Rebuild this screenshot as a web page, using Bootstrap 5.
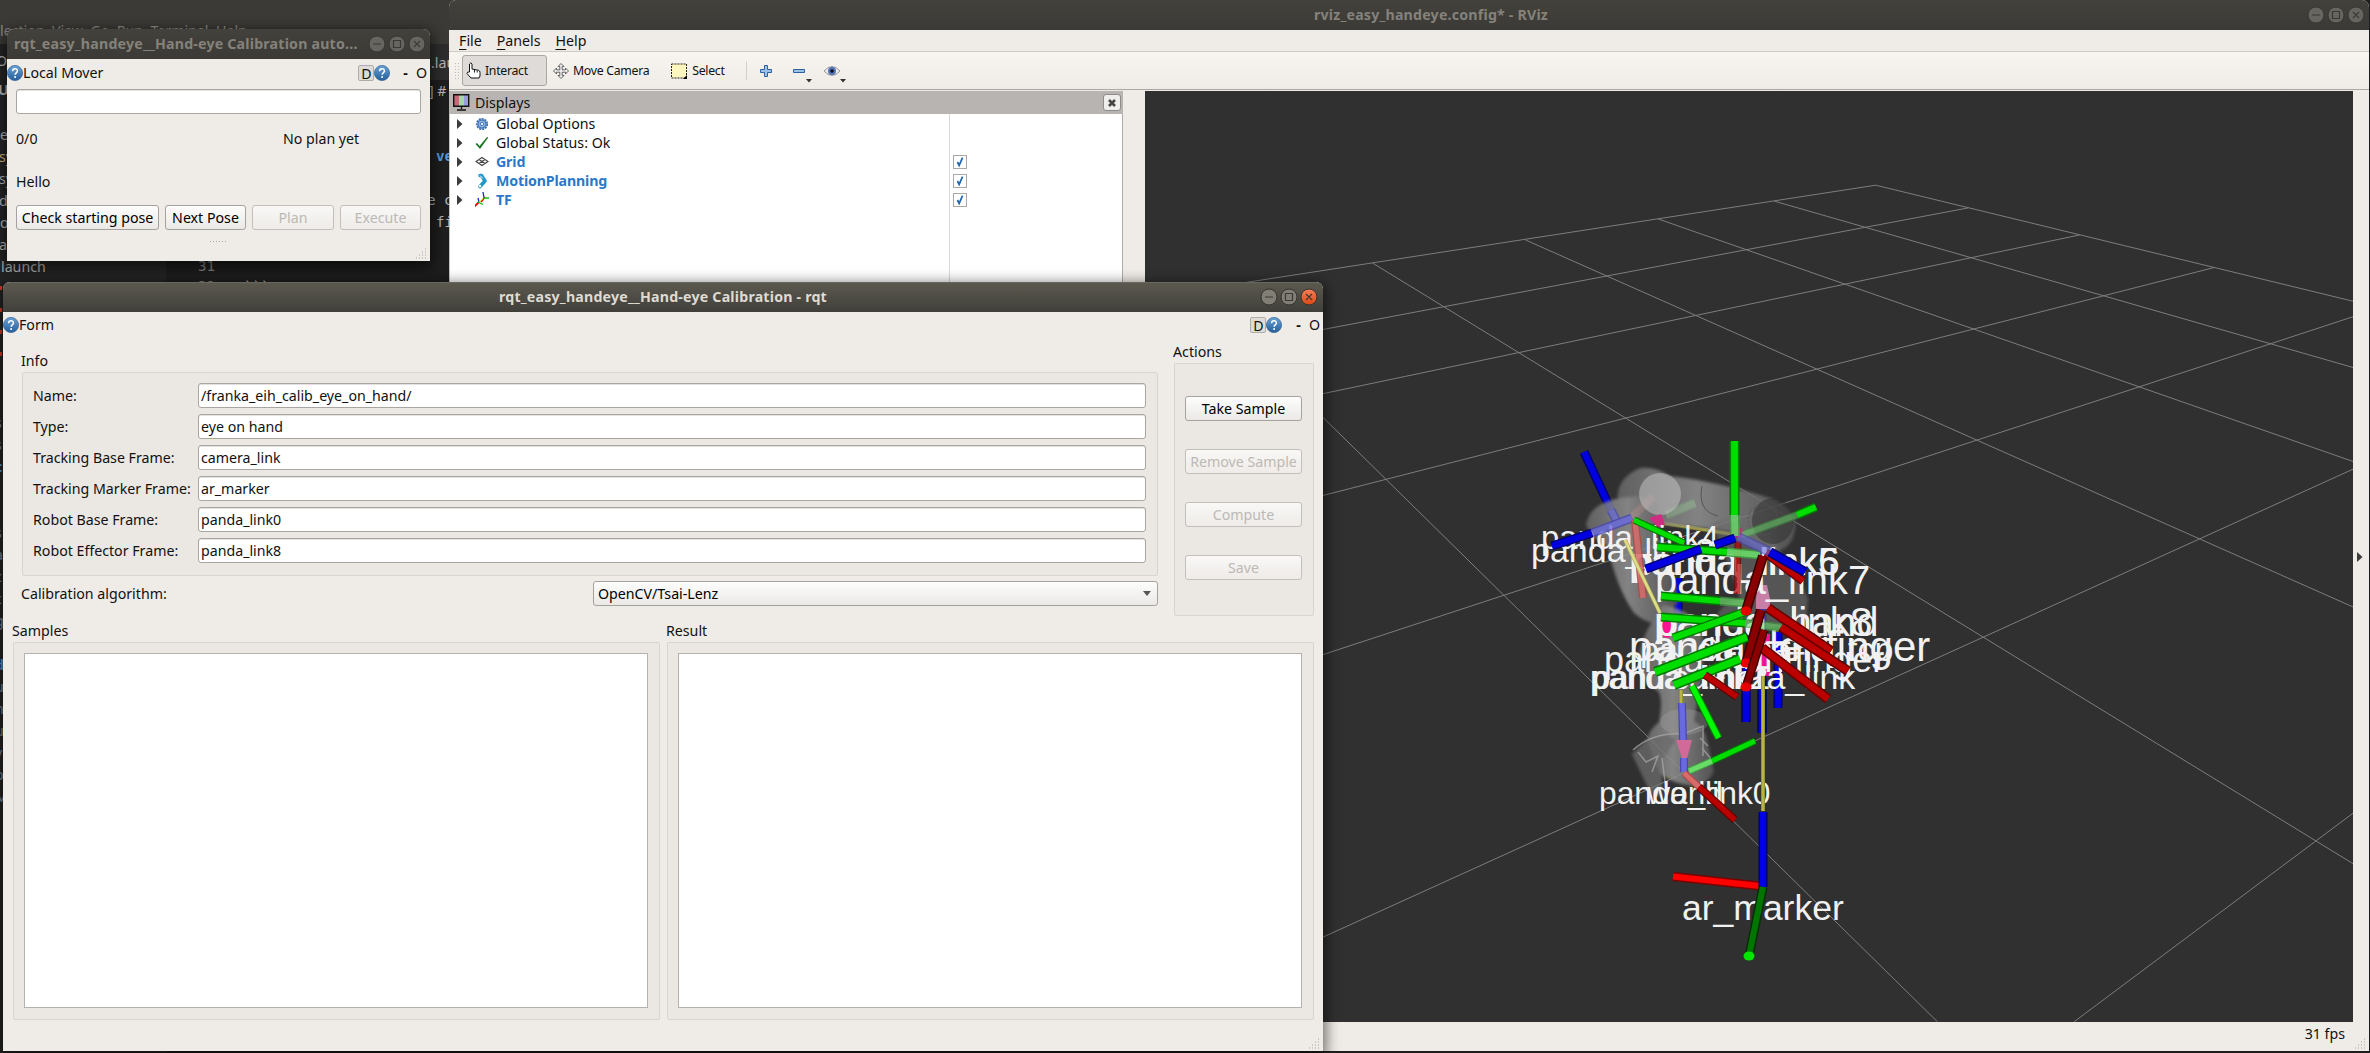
<!DOCTYPE html>
<html lang="en">
<head>
<meta charset="utf-8">
<title>rqt_easy_handeye</title>
<link href="https://cdn.jsdelivr.net/npm/bootstrap@5.3.0/dist/css/bootstrap.min.css" rel="stylesheet">
<script src="https://cdn.jsdelivr.net/npm/bootstrap@5.3.0/dist/js/bootstrap.bundle.min.js"></script>
<style>
html,body{height:1053px;overflow:hidden}
body{background:#1e1e1e;font:14.2px/18px "Noto Sans","Open Sans",sans-serif;letter-spacing:0;color:#111;white-space:nowrap;position:relative;width:2370px}
svg{display:block;flex:none}
/* editor behind the windows */
.desk{left:0;top:0;width:2370px;height:1053px;background:#1e1e1e;overflow:hidden}
.desk .topbar{height:44px;width:460px;background:#3b3a36}
.desk .side{left:0;top:44px;width:166px;height:1009px;background:#252526}
.desk .tabs{left:420px;top:44px;width:40px;height:36px;background:#2d2d2d}
.frag{position:absolute;color:#b6b6b6;letter-spacing:0}
.mono{font-family:"DejaVu Sans Mono",monospace}
.sliver{left:-5px;top:412px;line-height:22px;color:#7f93a8}
.sliver b{color:#569cd6}
.ticks{left:0;top:286px;width:2px;height:78px;background:repeating-linear-gradient(#d0442c 0 4px,transparent 4px 22px)}
/* windows */
.win{position:absolute;background:#efebe6;border-radius:7px 7px 0 0;overflow:hidden}
.win-shadow{box-shadow:0 4px 14px 3px rgba(0,0,0,.55)}
.tbar{height:30px;background:linear-gradient(#42413c,#3b3a36);color:#85827b;font-weight:700;position:relative;flex:none;letter-spacing:.2px}
.tbar.on{background:linear-gradient(#5b594f,#403f3a);color:#dfdbd2;border-top:1px solid #68665d;padding-bottom:2px}
.wbtns{right:6px;top:6px;gap:2px}
.edge{border:1px solid #a9a6a1;border-radius:3px;background:#fff;height:25px;box-shadow:inset 0 1px #e4e2df}
.pbtn{border:1px solid #a6a29d;border-radius:3px;background:linear-gradient(#fdfdfd,#ebe9e6);height:25px;line-height:22px;padding:0;color:#000;font-size:inherit;letter-spacing:inherit}
.pbtn:disabled{color:#bcb9b5;border-color:#c3bfbb;opacity:1;background:linear-gradient(#f9f8f6,#eeebe8)}
.dbox{width:16px;height:16px;border:1px solid #b0aca7;border-radius:2px;background:#dfdbd7;line-height:15px;text-align:center}
.gbox{border:1px solid #d8d4ce;border-radius:2px;background:#ebe7e2}
.frow{height:25px;margin-bottom:6px}
.frow label{width:165px}
.frow .edge{padding-left:2px;line-height:23px}
.listv{border:1px solid #b5b2ae;background:#fff}
/* rviz */
.menu{height:22px;border-bottom:1px solid #cfcbc5}
.menu u{text-underline-offset:3px;text-decoration-thickness:1px}
.tools{height:38px;background:linear-gradient(#f8f5f1,#efebe6);border-bottom:1px solid #aaa6a1;font-size:12.3px;letter-spacing:-.3px}
.tool-on{background:#dfdbd8;border:1px solid #aaa6a3;border-radius:3px;width:85px;height:31px}
.handle{width:5px;height:17px;background:radial-gradient(circle,#bbb 35%,transparent 45%) 0 0/3px 3px}
.dock-h{height:23px;background:#b8b4b1}
.xbtn{width:18px;height:17px;border:1px solid #8e8b88;border-radius:3px;background:#f0eeec}
.tree{background:linear-gradient(90deg,transparent 499px,#d9d9d9 499px,#d9d9d9 500px,transparent 500px) #fff;border-right:1px solid #b0aca8;border-left:1px solid #c5c1bd}
.trow{height:19px;padding-left:7px}
.trow .arw{margin-right:12px}
.trow span{margin-left:7px}
.trow.vis{color:#2979c7;font-weight:700;letter-spacing:-.15px}
.trow.vis span{width:457px}
.chk{width:14px;height:14px;border:1px solid #aaa7a4;background:#fff}
.view3d text{font-family:"Liberation Sans",Arial,sans-serif;fill:#f1f1f1;letter-spacing:0}
.grip{position:absolute;right:3px;bottom:2px}
</style>
</head>
<body>
<svg width="0" height="0" class="position-absolute"><defs>
 <linearGradient id="hg" x1="0" y1="0" x2="0" y2="1"><stop offset="0" stop-color="#6aa2d6"/><stop offset="1" stop-color="#255e99"/></linearGradient>
 <linearGradient id="cg" x1="0" y1="0" x2="0" y2="1"><stop offset="0" stop-color="#f68058"/><stop offset="1" stop-color="#dc4714"/></linearGradient>
 <symbol id="help" viewBox="0 0 16 16"><circle cx="8" cy="8" r="7.6" fill="url(#hg)" stroke="#2f6297" stroke-width=".7"/><path d="M5.6 6.3C5.6 2.8 10.5 3 10.4 6c0 1.8-2.3 1.9-2.3 3.8" fill="none" stroke="#fff" stroke-width="1.5"/><circle cx="8.1" cy="12" r="1" fill="#fff"/></symbol>
 <symbol id="dim" viewBox="0 0 58 18"><g fill="#676560" stroke="#383733"><circle cx="9" cy="9" r="8"/><circle cx="29" cy="9" r="8"/><circle cx="49" cy="9" r="8"/></g><path d="M5 9h8M25.500 5.500h7v7h-7zM46 6l6 6M52 6l-6 6" fill="none" stroke="#3a3935" stroke-width="1.200"/></symbol>
 <symbol id="lit" viewBox="0 0 58 18"><g fill="#807e75" stroke="#35342f"><circle cx="9" cy="9" r="8"/><circle cx="29" cy="9" r="8"/></g><circle cx="49" cy="9" r="8" fill="url(#cg)" stroke="#35342f"/><path d="M5 9h8M25.500 5.500h7v7h-7zM46 6l6 6M52 6l-6 6" fill="none" stroke="#3a3935" stroke-width="1.200"/></symbol>
 <symbol id="gripdots" viewBox="0 0 11 11"><path d="M0 10h1m2 0h1m2 0h1m2 0h1M3 7h1m2 0h1m2 0h1M6 4h1m2 0h1M9 1h1" stroke="#a9a5a0"/></symbol>
 <symbol id="arr" viewBox="0 0 6 10"><path d="M0 0l5.500 5L0 10z" fill="#3c3c3c"/></symbol>
 <symbol id="tick" viewBox="0 0 14 14"><path d="M4 7l2 4 4-9" fill="none" stroke="#2166b0" stroke-width="2"/></symbol>
</defs></svg>

<div class="desk position-absolute">
 <div class="topbar"></div><div class="side position-absolute"></div><div class="tabs position-absolute"></div>
 <span class="frag" style="left:0;top:22px;color:#8d8b85">lection&nbsp; View&nbsp; Go&nbsp; Run&nbsp; Terminal&nbsp; Help</span>
 <span class="frag" style="left:-4px;top:52px">OP</span><span class="frag fw-bold" style="left:-2px;top:81px">U</span>
 <span class="frag" style="left:0;top:126px">e</span><span class="frag" style="left:-1px;top:148px;color:#d7ba7d">sy</span><span class="frag" style="left:-1px;top:170px">sy</span><span class="frag" style="left:-1px;top:192px">d</span><span class="frag" style="left:0;top:214px">o</span><span class="frag" style="left:-1px;top:236px">a</span><span class="frag" style="left:1px;top:258px">launch</span>
 <span class="frag mono" style="left:198px;top:257px;color:#858585">31</span><span class="frag mono" style="left:198px;top:277px;color:#858585">32</span><span class="frag mono" style="left:244px;top:278px">```</span>
 <span class="frag" style="left:431px;top:54px">.lau</span><span class="frag" style="left:429px;top:82px">] #</span>
 <span class="frag mono fw-bold" style="left:436px;top:147px;color:#569cd6">ve</span><span class="frag mono" style="left:427px;top:191px">e c</span><span class="frag mono" style="left:436px;top:213px">fi</span>
 <div class="ticks position-absolute"></div>
 <div class="sliver position-absolute">s<br>s<br><b>c</b><br><b>l</b><br><b>l</b><br>s<br>a<br>c<br>c<br>g<br>l<br><b>d</b><br>u<br>n<br>u<br>v<br>o<br>M</div>
</div>

<!-- RViz -->
<div class="win d-flex flex-column" style="left:449px;top:0;width:1920px;height:1051px">
 <div class="tbar d-flex align-items-center justify-content-center"><span style="margin-left:44px">rviz_easy_handeye.config* - RViz</span><div class="wbtns position-absolute d-flex" style="right:4px"><svg width="58" height="18"><use href="#dim"/></svg></div></div>
 <div class="menu d-flex align-items-center" style="gap:15px;padding-left:10px"><span><u>F</u>ile</span><span><u>P</u>anels</span><span><u>H</u>elp</span></div>
 <div class="tools d-flex align-items-center flex-none">
  <div class="handle" style="margin:0 3px 0 5px"></div>
  <div class="tool-on d-flex align-items-center" style="padding-left:3px">
   <svg width="15" height="17" viewBox="0 0 15 17"><path d="M3.500 10V2q1.500-2.500 2.500 0v5l6.500 1.300q1.500.5 1.500 2V14l-1 2H5l-4-4.500Q1 9.500 3.500 10z" fill="#fff" stroke="#111"/><path d="M8.500 8v2.500M11.200 8.500v2" stroke="#222"/></svg>
   <span style="margin-left:4px">Interact</span></div>
  <svg style="margin-left:6px" width="16" height="16" viewBox="0 0 16 16"><path d="M8 .5l3 3H9.200v3.300h3.300V5l3 3-3 3V9.200H9.200v3.300H11l-3 3-3-3h1.800V9.200H3.500V11l-3-3 3-3v1.800h3.300V3.500H5z" fill="#eee" stroke="#555" stroke-width=".9"/></svg>
  <span style="margin-left:4px">Move Camera</span>
  <svg style="margin-left:22px" width="17" height="16" viewBox="0 0 17 16"><path d="M.5 1h15v14h-15z" fill="#fdf6bf" stroke="#222" stroke-dasharray="2 1"/><path d="M16 12v4h-4z"/></svg>
  <span style="margin-left:4px">Select</span>
  <div style="width:1px;height:19px;background:#d2cec9;margin:0 13px 0 21px"></div>
  <svg width="12" height="12" viewBox="0 0 12 12"><path d="M4.500.5h3v4h4v3h-4v4h-3v-4h-4v-3h4z" fill="#9cc2e8" stroke="#2c62a4"/></svg>
  <svg style="margin-left:21px" width="22" height="24" viewBox="0 0 22 24"><path d="M.5 10.500h11v3H.5z" fill="#9cc2e8" stroke="#2c62a4"/><path d="M13 20h6l-3 3.500z" fill="#333"/></svg>
  <svg style="margin-left:9px" width="24" height="24" viewBox="0 0 24 24"><path d="M0 12q8-9 16 0-8 9-16 0z" fill="#eee" stroke="#999"/><circle cx="8" cy="12" r="4" fill="#5472b8"/><circle cx="8" cy="12" r="1.800" fill="#111"/><path d="M16 20h6l-3 3.500z" fill="#333"/></svg>
 </div>
 <div class="d-flex flex-grow-1" style="padding-top:1px">
  <div class="d-flex flex-column" style="width:674px">
   <div class="dock-h d-flex align-items-center" style="padding:0 2px 0 4px">
    <svg width="17" height="17" viewBox="0 0 17 17"><path fill="#c46a78" d="M1 1h5v11H1z"/><path fill="#a5d6a7" d="M6 1h5v11H6z"/><path fill="#9a9ade" d="M11 1h5v11h-5z"/><path d="M.7.700h15v11.500h-15zM8.500 12v3M4 16h9" fill="none" stroke="#111" stroke-width="1.400"/></svg>
    <span style="margin-left:5px">Displays</span><div class="xbtn ms-auto d-flex align-items-center justify-content-center"><svg width="8" height="8" viewBox="0 0 8 8"><path d="M1 1l6 6M7 1L1 7" stroke="#444" stroke-width="2.600"/></svg></div></div>
   <div class="tree flex-grow-1">
    <div class="trow d-flex align-items-center"><svg class="arw" width="6" height="10"><use href="#arr"/></svg><svg width="14" height="14" viewBox="0 0 14 14"><circle cx="7" cy="7" r="5.300" fill="#8db4e0" stroke="#3d6eae" stroke-width="1.600" stroke-dasharray="2 1"/><circle cx="7" cy="7" r="4" fill="none" stroke="#4779b8"/><circle cx="7" cy="7" r="1.600" fill="#fff" stroke="#4779b8"/></svg><span>Global Options</span></div>
    <div class="trow d-flex align-items-center"><svg class="arw" width="6" height="10"><use href="#arr"/></svg><svg width="14" height="14" viewBox="0 0 14 14"><path d="M.5 8L2 7l2.500 3L12 1l1.300.5L5 13z" fill="#1d7724"/></svg><span>Global Status: Ok</span></div>
    <div class="trow vis d-flex align-items-center"><svg class="arw" width="6" height="10"><use href="#arr"/></svg><svg width="14" height="14" viewBox="0 0 14 14"><path d="M7 2.500l6 4-6 4-6-4zM4 4.500l6 4M10 4.500l-6 4" fill="none" stroke="#444" stroke-width="1.200"/></svg><span>Grid</span><div class="chk"><svg width="12" height="12"><use href="#tick"/></svg></div></div>
    <div class="trow vis d-flex align-items-center"><svg class="arw" width="6" height="10"><use href="#arr"/></svg><svg width="14" height="16" viewBox="0 0 14 16"><path d="M5 2.500h1.500l3.500 5.500-5 5.500" fill="none" stroke="#2196c8" stroke-width="3.600" stroke-linecap="round" stroke-linejoin="round"/><circle cx="5" cy="13" r="1.300" fill="#fff"/><path d="M5 2.500l3 3" stroke="#fff"/></svg><span>MotionPlanning</span><div class="chk"><svg width="12" height="12"><use href="#tick"/></svg></div></div>
    <div class="trow vis d-flex align-items-center"><svg class="arw" width="6" height="10"><use href="#arr"/></svg><svg width="14" height="16" viewBox="1 0 14 16"><path d="M0 15l5-5M11 5L7 10" stroke="#e00" stroke-width="1.800"/><path d="M9 0l1 6M4 6l1 4" stroke="#22d" stroke-width="1.300"/><path d="M9 6h6M4 10l5 2.500" stroke="#0c0" stroke-width="1.300"/><path d="M5 10l4-3" stroke="#dd0"/></svg><span>TF</span><div class="chk"><svg width="12" height="12"><use href="#tick"/></svg></div></div>
   </div>
   <div style="height:29px"></div>
  </div>
  <div style="width:22px"></div>
  <div class="d-flex flex-column">
  <svg class="view3d" width="1208" height="931" viewBox="1145 91 1208 931">
   <defs><linearGradient id="arm" x1="0" x2="1"><stop offset="0" stop-color="#6a6a6a"/><stop offset=".45" stop-color="#959595"/><stop offset="1" stop-color="#5a5a5a"/></linearGradient><filter id="soft" x="-10%" y="-10%" width="120%" height="120%"><feGaussianBlur stdDeviation="1.500"/></filter></defs>
   <path d="M1145 91h1208v931H1145z" fill="#303030"/>
   <g stroke="#7d7d7d" stroke-width="1" fill="none"><path d="M1145 298L1875.700 185.200L2353.400 301.300M1968.300 207.900L1145 363M2079.800 234.900L1145 431M2214.200 267.500L1145 541M2353.400 316.600L1145 713M2353.400 469L1145 1018M2353.400 812.900L2074.200 1021.700M1774.500 201.200L2353.400 367.600M1658.300 219L2353.400 461.600M1525.400 239.900L2353.400 607.100M1372.800 263.200L2353.400 863.900M1323 417.400L1937.400 1021.700"/></g>
   <g id="rods-back"></g>
   <g filter="url(#soft)" opacity=".82">
    <path d="M1640 468q15-2 30 8 45 5 100 22 28 10 25 32-3 22-26 22-18-4-28-20-50-6-90-8-18 0-30-12-12-30 19-44z" fill="url(#arm)"/>
    <path d="M1630 497q-40 3-44 28 6 14 22 22 8 40 26 66 16 14 28 8l16-18q-2-30-12-48l-14-32 6-20q-10-8-28-6z" fill="url(#arm)"/>
    <path d="M1662 605q28 4 40 24 4 40-4 65-2 20-4 27 8 4 12 15 6 24 8 36-6 12-22 14-24-4-33-14-8-20-12-32 2-10 12-18 4-20 0-30-22-14-20-34 0-20 23-51z" fill="url(#arm)"/>
    <path d="M1712 525q14-10 30 0 24 2 36 24 20 22 30 50l-2 26-60 6q-30-2-28-18 8-12 22-14-10-30-28-74z" fill="#777" opacity=".65"/>
    <path d="M1632 754l14-14 20-6 10 6-14 20v38l-12-6z" fill="#777" opacity=".8"/>
   </g>
   <ellipse cx="1660" cy="494" rx="21" ry="21" fill="#c9c9c9" opacity=".5"/>
   <ellipse cx="1773" cy="521" rx="21" ry="23" fill="#2e2e2e" opacity=".5"/>
   <circle cx="1763" cy="520" r="15" fill="none" stroke="#555" stroke-dasharray="2 2"/><path d="M1702 486q-5 25 16 30M1800 590l-24 10M1795 604l-30 8M1800 575l-15 12" fill="none" stroke="#555"/>
   <ellipse cx="1684" cy="722" rx="24" ry="13" fill="#aaa" opacity=".3"/>
   <path d="M1633 750q20-18 50-16l20-8v30M1638 752l8 10 12-6-6 16M1662 758l4 32M1700 738l8 8M1702 748l10 12" fill="none" stroke="#aaa" stroke-width="1.500" opacity=".7"/>
   <path d="M1649 518l12-4 4 10-6 4z" fill="#d02d82"/><ellipse cx="1667" cy="629" rx="6" ry="9" fill="#ff1493"/><path d="M1757 585h10l3 14v10h-14v-10z" fill="#c77fa8"/><path d="M1757 634h13v42h-13z" fill="#f01393"/><circle cx="1739" cy="533" r="5" fill="#b3357c"/>
   <g font-size="33"><text x="1541" y="549">panda_link4</text><text x="1531" y="562" font-size="34">panda_link3</text><text x="1629" y="575" font-size="39">panda_link5</text><text x="1632" y="575" font-size="38.500">panda_link6</text><text x="1655" y="594" font-size="39.900">panda_link7</text>
   <text x="1654" y="636" font-size="40.500">panda_link8</text><text x="1656" y="636" font-size="40">panda_hand</text><text x="1629" y="661" font-size="42">panda_leftfinger</text><text x="1640" y="661" font-size="34">panda_hand_tcp</text><text x="1604" y="672" font-size="36">panda_rightfinger</text><text x="1590" y="689" font-size="33">panda_link2</text><text x="1592" y="689" font-size="33">panda_link1</text><text x="1672" y="689" font-size="34">camera_link</text>
   <text x="1599" y="804" font-size="31.800">panda_link0</text><text x="1647" y="804" font-size="31.800">world</text><text x="1682" y="920" font-size="35.500">ar_marker</text></g>
   <g id="rods-front"></g>
   <path d="M1676 740h16l-5 18h-5z" fill="#d16a99"/>
  </svg>
  <div class="text-end" style="padding:3px 8px 0 0">31 fps</div>
  </div>
  <div class="d-flex" style="width:16px;padding:461px 0 0 4px"><svg width="6" height="10"><use href="#arr"/></svg></div>
 </div>
 <svg class="grip" width="11" height="11"><use href="#gripdots"/></svg>
</div>

<!-- automatic mover -->
<div class="win win-shadow d-flex flex-column" style="left:7px;top:29px;width:423px;height:232px">
 <div class="tbar d-flex align-items-center" style="padding-left:7px"><span>rqt_easy_handeye__Hand-eye Calibration auto...</span><div class="wbtns position-absolute d-flex" style="right:4px"><svg width="58" height="18"><use href="#dim"/></svg></div></div>
 <div class="d-flex align-items-center" style="height:27px;padding-right:3px"><svg width="16" height="16"><use href="#help"/></svg><span>Local Mover</span><span class="dbox ms-auto">D</span><svg width="16" height="16"><use href="#help"/></svg><b style="margin:0 8px 0 13px">-</b><span>O</span></div>
 <div class="d-flex flex-column" style="padding:3px 9px 0">
  <div class="edge"></div>
  <div class="d-flex" style="padding-top:16px"><span style="width:267px">0/0</span><span>No plan yet</span></div>
  <div style="padding-top:25px">Hello</div>
  <div class="d-flex" style="gap:6px;padding-top:14px"><button class="pbtn" style="width:143px">Check starting pose</button><button class="pbtn" style="width:81px">Next Pose</button><button class="pbtn" style="width:82px" disabled>Plan</button><button class="pbtn" style="width:81px" disabled>Execute</button></div>
  <div class="mx-auto" style="width:17px;height:1px;margin-top:11px;background:repeating-linear-gradient(90deg,#aaa 0 1px,transparent 1px 3px)"></div>
 </div>
 <svg class="grip" width="11" height="11"><use href="#gripdots"/></svg>
</div>

<!-- calibration -->
<div class="win win-shadow d-flex flex-column" style="left:3px;top:282px;width:1320px;height:769px">
 <div class="tbar on d-flex align-items-center justify-content-center"><span>rqt_easy_handeye__Hand-eye Calibration - rqt</span><div class="wbtns position-absolute d-flex" style="right:5px;top:5px"><svg width="58" height="18"><use href="#lit"/></svg></div></div>
 <div class="d-flex align-items-center" style="height:27px;padding:0 3px 1px 0"><svg width="16" height="16"><use href="#help"/></svg><span>Form</span><span class="dbox ms-auto">D</span><svg width="16" height="16"><use href="#help"/></svg><b style="margin:0 8px 0 14px">-</b><span>O</span></div>
 <div class="d-flex" style="gap:15px;padding:3px 9px 0 18px">
  <div style="width:1137px">
   <div style="padding:10px 0 2px">Info</div>
   <div class="gbox" style="height:204px;padding:10px 11px 0 10px;margin-left:1px">
    <div class="frow d-flex align-items-center"><label>Name:</label><div class="edge flex-grow-1">/franka_eih_calib_eye_on_hand/</div></div>
    <div class="frow d-flex align-items-center"><label>Type:</label><div class="edge flex-grow-1">eye on hand</div></div>
    <div class="frow d-flex align-items-center"><label>Tracking Base Frame:</label><div class="edge flex-grow-1">camera_link</div></div>
    <div class="frow d-flex align-items-center"><label>Tracking Marker Frame:</label><div class="edge flex-grow-1">ar_marker</div></div>
    <div class="frow d-flex align-items-center"><label>Robot Base Frame:</label><div class="edge flex-grow-1">panda_link0</div></div>
    <div class="frow d-flex align-items-center"><label>Robot Effector Frame:</label><div class="edge flex-grow-1">panda_link8</div></div>
   </div>
   <div class="d-flex align-items-center" style="padding-top:5px"><span style="width:572px">Calibration algorithm:</span><div class="pbtn flex-grow-1 d-flex align-items-center" style="padding:0 6px 0 4px"><span>OpenCV/Tsai-Lenz</span><svg class="ms-auto" width="8" height="5" viewBox="0 0 8 5"><path d="M0 0h8L4 5z" fill="#555"/></svg></div></div>
  </div>
  <div class="flex-grow-1">
   <div style="padding:1px 0 2px">Actions</div>
   <div class="gbox d-flex flex-column" style="height:253px;gap:28px;padding:32px 11px 0 10px;margin-left:1px"><button class="pbtn">Take Sample</button><button class="pbtn" disabled>Remove Sample</button><button class="pbtn" disabled>Compute</button><button class="pbtn" disabled>Save</button></div>
  </div>
 </div>
 <div class="d-flex" style="gap:6px;padding:6px 9px 0">
  <div style="width:648px"><div style="padding:0 0 2px">Samples</div><div class="gbox" style="height:378px;padding:10px 11px 11px 10px;margin-left:1px"><div class="listv h-100"></div></div></div>
  <div style="width:648px"><div style="padding:0 0 2px">Result</div><div class="gbox" style="height:378px;padding:10px 11px 11px 10px;margin-left:1px"><div class="listv h-100"></div></div></div>
 </div>
 <svg class="grip" width="11" height="11"><use href="#gripdots"/></svg>
</div>

<script>
// Each rod: x1, y1, x2, y2, fill, edge, width, opacity, end-cap colour
const G=['#00de00','#007800'],B=['#0000e0','#000070'],R=['#bb0000','#660000'],D=['#8a0000','#3c0000'],Y=['#b6b445','#85842c'];
const LB=['#6a6ae0','#4848b0'],LR=['#d86a6a','#b04848'],LG=['#6adc6a','#40a040'],F=['#ff0000','#7d0000'];
const back=[[1584,452,1611,510,B],[1653,497,1632,517,LR,9,.8],[1695,503,1666,515,LG],[1657,522,1737,535,Y,4,.8],[1678,578,1678,630,B],
 [1762,600,1762,733,B],[1778,632,1778,708,B],[1746,665,1746,722,B]];
const front=[[1611,510,1616,520,LB,9,.7],[1592,533,1552,546,B],[1632,518,1592,533,LB,9,.8],[1635,520,1643,598,LR,8,.85],[1634,520,1684,543,G,7],
 [1734.500,441,1734.500,515,G,10],[1734.500,515,1735,536,LG,10,.8],[1816,507,1797,515,G],[1797,515,1742,535,LG,8,.5],[1738,541,1737,594,R,7,.7],
 [1657,547,1727,552,G],[1727,552,1760,555,LG,9,.9],[1735,538,1715,545,B],[1701,549,1646,569,B],[1766,553,1803,581,R],[1738,537,1770,552,LB,10,.6],[1770,552,1805,572,B,10],
 [1625,540,1660,613,['#dddd88','#aaaa50'],4],[1661,596,1720,601,G],[1720,601,1745,603,LG,9,.7],[1661,617,1745,623,G],[1745,623,1782,628,LG,9,.6],
 [1750,610,1673,638,G],[1768,608,1831,651,R,10],[1781,627,1848,671,R,10],[1762,648,1828,699,R,10],
 [1763,556,1746,611,D,10,1,'#e60000'],[1761,610,1746,663,D,10,1,'#e60000'],[1764,630,1746,687,D,9,1,'#e60000'],
 [1747,637,1655,672,G,10],[1740,659,1674,685,G,10],[1746,692,1746,722,B],[1762,690,1762,733,B],[1705,675,1737,697,R,8],[1692,686,1718.600,738,['#00fa00','#008000'],8],
 [1763,676,1763,811,Y,4],[1681,690,1681,705,Y,4],[1682,703,1683,740,LB,8],[1684,758,1684,772,LB,8],
 [1755,741,1712,761,G,7],[1712,761,1689,771,LG,7],[1684,773,1699,787,LR,7],[1699,787,1735,820,R,8],
 [1673,876.500,1760,886,F],[1763,812,1763,887,B],[1763,887,1749,956,['#007600','#003000'],9,1,'#00e600']];
function draw(id,list){
 document.getElementById(id).innerHTML=list.map(([x1,y1,x2,y2,c,w=9,o=1,cap])=>{
  const l=(s,k)=>`<line x1="${x1}" y1="${y1}" x2="${x2}" y2="${y2}" stroke="${s}" stroke-width="${k}"/>`;
  return `<g opacity="${o}">${l(c[1],w)}${l(c[0],w*.68)}${cap?`<ellipse cx="${x2}" cy="${y2}" rx="5.500" ry="4.500" fill="${cap}"/>`:''}</g>`}).join('');
}
draw('rods-back',back);draw('rods-front',front);
</script>
</body>
</html>
